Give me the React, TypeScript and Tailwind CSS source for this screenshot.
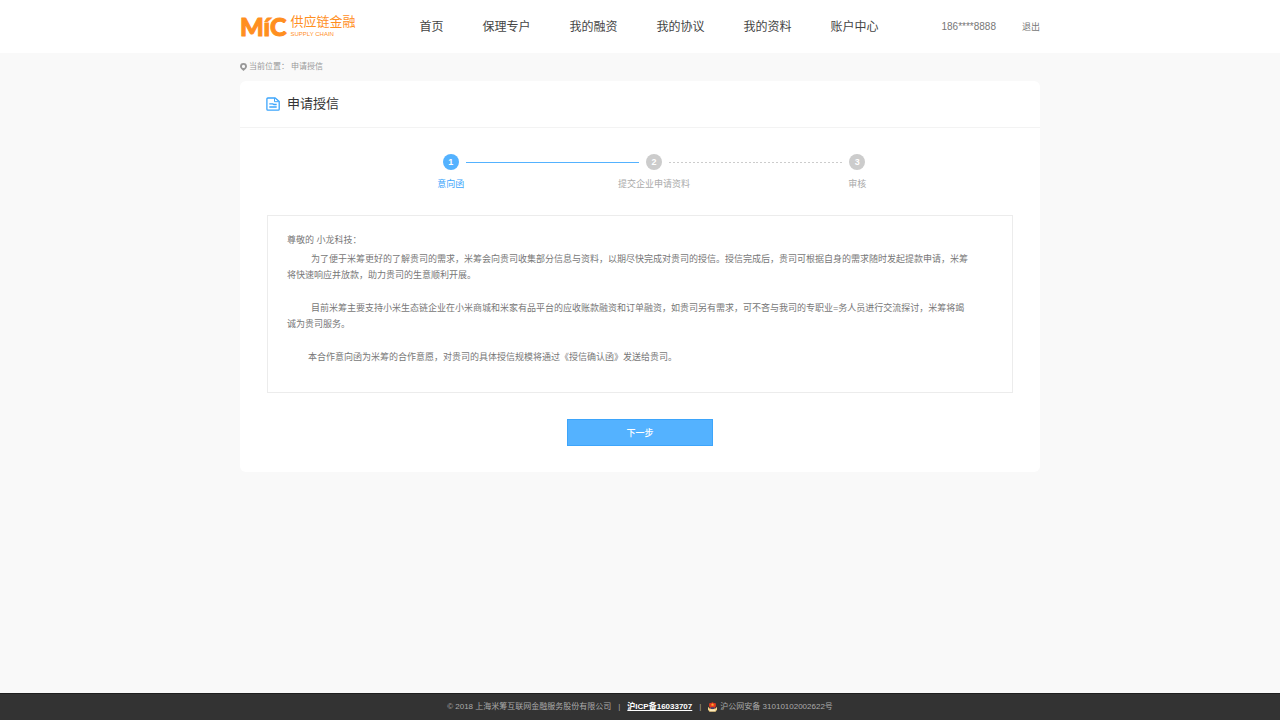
import clsx from "clsx";

const navItems = ["首页", "保理专户", "我的融资", "我的协议", "我的资料", "账户中心"];

type Line = "none" | "solid" | "dashed";

const steps: { label: string; active: boolean; before: Line; after: Line }[] = [
  { label: "意向函", active: true, before: "none", after: "solid" },
  { label: "提交企业申请资料", active: false, before: "solid", after: "dashed" },
  { label: "审核", active: false, before: "dashed", after: "none" },
];

function StepLine({ type }: { type: Line }) {
  return (
    <span
      className={clsx(
        "h-px flex-1",
        type === "solid" && "bg-[#54b2ff]",
        type === "dashed" && "bg-[repeating-linear-gradient(90deg,#ccc_0_2px,transparent_2px_4px)]"
      )}
    />
  );
}

function Logo() {
  return (
    <a href="#" className="flex items-center gap-1 pb-px text-[#ff8f1f]">
      <span className="font-['Lato',sans-serif] text-[25px] leading-7 font-black [-webkit-text-stroke:1px_#ff8f1f]">
        MíC
      </span>
      <span className="flex flex-col gap-px">
        <span className="text-[13px] leading-4">供应链金融</span>
        <span className="text-[6px] leading-[7px]">SUPPLY CHAIN</span>
      </span>
    </a>
  );
}

function PinIcon() {
  return (
    <svg viewBox="0 0 14 16" className="h-2 w-[7px]" fill="#999" aria-hidden="true">
      <path
        fillRule="evenodd"
        d="M7 0a7 7 0 0 0-7 6.8C0 10.500 4.500 13.500 7 16c2.500-2.500 7-5.500 7-9.200A7 7 0 0 0 7 0Zm0 3.600a3.200 3.200 0 1 1 0 6.400 3.200 3.200 0 0 1 0-6.400Z"
      />
    </svg>
  );
}

function DocIcon() {
  return (
    <svg
      viewBox="0 0 14 14"
      className="size-[14px]"
      fill="none"
      stroke="#3da5fb"
      strokeWidth="1.300"
      strokeLinejoin="round"
      aria-hidden="true"
    >
      <path d="M1.800 1h7.400l4 3.600v7.600a.9.900 0 0 1-.9.900H1.800a.9.900 0 0 1-.9-.9V1.900a.9.900 0 0 1 .9-.9Z" />
      <path d="M8.500 1.200v3.500h4.200" strokeWidth="1" />
      <path d="M3.300 6.900h3.400l1 .6h3M3.300 10h7.400" />
    </svg>
  );
}

function PoliceBadge() {
  return (
    <svg viewBox="0 0 18 20" className="h-[10px] w-[9px]" aria-hidden="true">
      <path d="M0 9.500 3 13h12l3-3.500v6L15 19.500H3L0 15.500Z" fill="#f6d58a" />
      <path d="M9 .5 12 2l3.500.3.500 4.200-1.200 4.500L9 14.500 3.200 11 2 6.500l.5-4.200L6 2Z" fill="#e0391f" />
      <path d="m9 2 1 2.400 2.400.1-1.900 1.600.7 2.400L9 7.200 6.800 8.500l.7-2.400-1.900-1.600 2.400-.1Z" fill="#ffb02d" />
      <path d="M4.500 10.500h9L11.500 14h-5Z" fill="#3b3f70" />
      <path d="M4 16.500h10" stroke="#fff3cf" strokeWidth="2" />
    </svg>
  );
}

export default function App() {
  return (
    <div className="flex min-h-screen flex-col bg-[#f9f9f9] font-['Liberation_Sans','Noto_Sans_CJK_SC',sans-serif] text-[9px] leading-4 text-[#777]">
      <header className="bg-white">
        <div className="mx-auto flex h-[53px] max-w-[800px] items-center">
          <Logo />
          <nav className="ml-16 flex gap-[39px] text-xs text-[#444]">
            {navItems.map((item) => (
              <a key={item} href="#">
                {item}
              </a>
            ))}
          </nav>
          <div className="ml-auto flex gap-[26px]">
            <span className="text-[10px]">186****8888</span>
            <a href="#">退出</a>
          </div>
        </div>
      </header>

      <main className="mx-auto w-full max-w-[800px] flex-1">
        <div className="flex h-7 items-center gap-[2px] text-[8px] text-[#999]">
          <PinIcon />
          <span>当前位置：</span>
          <span>申请授信</span>
        </div>

        <section className="rounded-md bg-white pb-[26px]">
          <div className="flex items-center gap-[7px] border-b border-[#f3f3f3] px-[26px] py-[13px]">
            <DocIcon />
            <h1 className="text-[13px] leading-5 text-[#333]">申请授信</h1>
          </div>

          <ol className="mr-[81px] ml-[109px] grid grid-cols-3 pt-[26px]">
            {steps.map((s, i) => (
              <li key={s.label} className="text-center">
                <div className="flex items-center gap-[7px]">
                  <StepLine type={s.before} />
                  <span
                    className={clsx(
                      "size-4 rounded-full font-bold text-white",
                      s.active ? "bg-[#54b2ff]" : "bg-[#ccc]"
                    )}
                  >
                    {i + 1}
                  </span>
                  <StepLine type={s.after} />
                </div>
                <p className={clsx("mt-[6px]", s.active ? "text-[#3da5fb]" : "text-[#aaa]")}>{s.label}</p>
              </li>
            ))}
          </ol>

          <div className="mx-[27px] mt-[23px] border border-[#ececec] px-[19px] pt-4 pb-[27px]">
            <p className="mb-[3px]">尊敬的 小龙科技：</p>
            <p className="mb-[17px] indent-6">
              为了便于米筹更好的了解贵司的需求，米筹会向贵司收集部分信息与资料，以期尽快完成对贵司的授信。授信完成后，贵司可根据自身的需求随时发起提款申请，米筹
              <br />
              将快速响应并放款，助力贵司的生意顺利开展。
            </p>
            <p className="mb-[17px] indent-6">
              目前米筹主要支持小米生态链企业在小米商城和米家有品平台的应收账款融资和订单融资，如贵司另有需求，可不吝与我司的专职业=务人员进行交流探讨，米筹将竭
              <br />
              诚为贵司服务。
            </p>
            <p className="indent-[21px]">
              本合作意向函为米筹的合作意愿，对贵司的具体授信规模将通过《授信确认函》发送给贵司。
            </p>
          </div>

          <button
            type="button"
            className="mx-auto mt-[26px] block h-[27px] w-[146px] border border-[#3da5fb] bg-[#54b2ff] font-medium text-white"
          >
            下一步
          </button>
        </section>
      </main>

      <footer className="flex h-[27px] items-center justify-center gap-[7px] border-t border-[#1f1f1f] bg-[#333] text-[8px] text-[#aaa]">
        <span>© 2018 上海米筹互联网金融服务股份有限公司</span>
        <span>|</span>
        <a href="#" className="font-bold text-white underline">
          沪ICP备16033707
        </a>
        <span>|</span>
        <span className="flex items-center gap-[3px]">
          <PoliceBadge />
          沪公网安备 31010102002622号
        </span>
      </footer>
    </div>
  );
}
